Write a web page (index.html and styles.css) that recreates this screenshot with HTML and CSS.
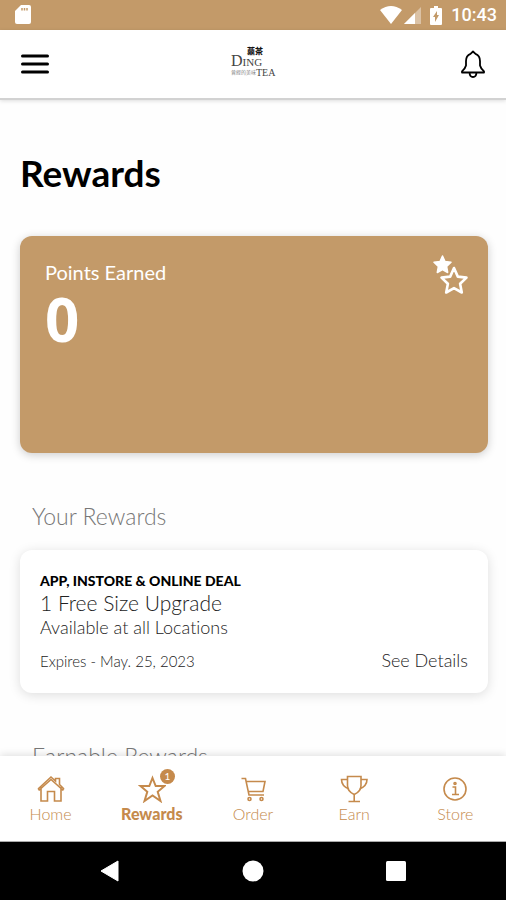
FILE: index.html
```html
<!DOCTYPE html>
<html lang="en">
<head>
<meta charset="utf-8">
<meta name="viewport" content="width=device-width, initial-scale=1">
<title>Rewards</title>
<link rel="stylesheet" href="styles.css">
</head>
<body>
<div class="status">
  <svg class="sd" width="16" height="20" viewBox="0 0 16 20" aria-hidden="true"><path fill="#fff" d="M6 0h8q2 0 2 2v15q0 2-2 2H2q-2 0-2-2V6z"/><path stroke="#c39a69" stroke-width="1.500" d="M7 3v2.500M9.500 3v2.500M12 3v2.500"/></svg>
  <div class="status-right">
    <svg width="22" height="18" viewBox="0 0 22 18" aria-hidden="true"><path fill="#fff" d="M0 4Q11-4 22 4L11 18z"/></svg>
    <svg width="17" height="17" viewBox="0 0 17 17" aria-hidden="true"><path fill="#fff" opacity=".4" d="M17 0v17H0z"/><path fill="#fff" d="M11 6v11H0z"/></svg>
    <svg class="battery" width="12" height="19" viewBox="0 0 12 19" aria-hidden="true"><path fill="#fff" d="M4 0h4v2h3q1 0 1 1v15q0 1-1 1H1q-1 0-1-1V3q0-1 1-1h3z"/><path fill="#c39a69" d="M7 5v4h2l-4 7v-5H3z"/></svg>
    <span class="clock">10:43</span>
  </div>
</div>

<header class="topbar">
  <button class="icon-btn" type="button" aria-label="Menu">
    <svg width="28" height="20" viewBox="0 0 28 20"><path stroke="#000" stroke-width="3" stroke-linecap="round" d="M1.500 2h25M1.500 10h25M1.500 18h25"/></svg>
  </button>
  <div class="logo">
    <span class="logo-mark">薡茶</span>
    <span class="logo-ding"><b>D</b>ING</span>
    <span class="logo-tea"><small>曾經的美味</small>TEA</span>
  </div>
  <button class="icon-btn" type="button" aria-label="Notifications">
    <svg width="24" height="28" viewBox="0 0 24 28" fill="none" stroke="#000" stroke-width="1.800" stroke-linejoin="round"><path d="M12 1.500L9.500 3.800Q5 5.500 5 11v4.500Q4.500 18 1 21.300V22.500H23V21.300Q19.500 18 19 15.500V11Q19 5.500 14.500 3.800zM8.500 22.500Q8.700 27 12 27T15.500 22.500"/></svg>
  </button>
</header>

<main class="content">
  <h1>Rewards</h1>
  <section class="points">
    <div>
      <h2>Points Earned</h2>
      <p class="total">0</p>
    </div>
    <svg width="36" height="40" viewBox="0 0 36 40" aria-hidden="true"><path fill="#fff" stroke="#fff" stroke-width="1.500" stroke-linejoin="round" d="M9.500 1l2.500 5.600 6 .7-4.400 4.200 1.100 6-5.200-3-5.200 3 1.100-6L1 7.300l6-.7z"/><path fill="#c39a69" stroke="#c39a69" stroke-width="6" d="M21 13l3.800 8.600 8.700 1-6.400 6.100 1.700 8.800-7.800-4.400-7.800 4.400 1.700-8.800-6.400-6.100 8.700-1z"/><path fill="none" stroke="#fff" stroke-width="2.600" stroke-linejoin="round" d="M21 13l3.800 8.600 8.700 1-6.400 6.100 1.700 8.800-7.800-4.400-7.800 4.400 1.700-8.800-6.400-6.100 8.700-1z"/></svg>
  </section>

  <h2 class="section-title">Your Rewards</h2>
  <article class="reward">
    <p class="kind">APP, INSTORE &amp; ONLINE DEAL</p>
    <h3>1 Free Size Upgrade</h3>
    <p class="where">Available at all Locations</p>
    <div class="reward-foot">
      <span class="expires">Expires - May. 25, 2023</span>
      <a class="details" href="#details">See Details</a>
    </div>
  </article>
  <h2 class="section-title">Earnable Rewards</h2>
</main>

<nav class="tabs" aria-label="Main">
  <a href="#home"><svg width="28" height="28" viewBox="0 0 28 28"><path d="M1 14L14 2l4.500 4V3.500h4v6L27 14M4 12v14h6.500V16.500h7V26H24V12M1 14l1.200 1L14 4.500 25.800 15 27 14"/></svg><span>Home</span></a>
  <a class="active" href="#rewards" aria-current="page"><svg width="28" height="28" viewBox="0 0 28 28"><path d="M14.500 3l3.200 8h8.800l-6.800 5.800 2.800 9.200-8-5.500-8 5.500 2.800-9.200L2.500 11h8.800z"/></svg><i class="badge">1</i><span>Rewards</span></a>
  <a href="#order"><svg width="28" height="28" viewBox="0 0 28 28"><path d="M2.500 3.500H6.500L10 20H25M7.500 6.500h18.500l-2 10H9.500"/><circle cx="10.500" cy="24" r="1.500"/><circle cx="22.500" cy="24" r="1.500"/></svg><span>Order</span></a>
  <a href="#earn"><svg width="28" height="28" viewBox="0 0 28 28"><path d="M7.500 1.500h13.500v9q0 6-6.800 9-6.700-3-6.700-9zM7.500 4.500H1.500q0 6.500 7.500 9.500M21 4.500h6q0 6.500-7.500 9.500M14.200 19.500v7M8.500 26.500h11.500"/></svg><span>Earn</span></a>
  <a href="#store"><svg width="28" height="28" viewBox="0 0 28 28"><circle cx="14" cy="14" r="11"/><path d="M11.500 12H14.500V19M11 19.500h7"/><circle cx="14" cy="8.500" r="1"/></svg><span>Store</span></a>
</nav>

<div class="system">
  <button type="button" aria-label="Back"><svg width="20" height="22" viewBox="0 0 20 22"><path fill="#fff" d="M18 1v20L1 11z" stroke="#fff" stroke-linejoin="round"/></svg></button>
  <button type="button" aria-label="Home"><svg width="22" height="22" viewBox="0 0 22 22"><circle cx="11" cy="11" r="10.500" fill="#fff"/></svg></button>
  <button type="button" aria-label="Recent apps"><svg width="20" height="20" viewBox="0 0 20 20"><rect width="20" height="20" rx="1.500" fill="#fff"/></svg></button>
</div>
</body>
</html>
```
FILE: styles.css
```css
* { box-sizing: border-box; }
body {
  margin: 0;
  height: 100vh;
  display: flex;
  flex-direction: column;
  background: #fefefe;
  color: #222;
  font-family: Lato, "Liberation Sans", sans-serif;
  font-variant-ligatures: none;
}
h1, h2, h3, p { margin: 0; font-weight: 400; }
svg { display: block; }
a { color: inherit; text-decoration: none; }
button { border: 0; padding: 0; background: none; }

.status {
  flex: none;
  display: flex;
  justify-content: space-between;
  align-items: center;
  height: 30px;
  padding: 0 9px 0 15px;
  background: #c39a69;
}
.status-right { display: flex; align-items: center; gap: 2px; }
.battery { margin-left: 7px; }
.clock { margin-left: 7px; color: #fff; font: 500 18px/30px Roboto, sans-serif; }

.topbar {
  flex: none;
  display: flex;
  justify-content: space-between;
  align-items: center;
  height: 70px;
  padding: 0 21px;
  background: #fff;
  border-bottom: 2px solid #d2d2d2;
  box-shadow: 0 1px 4px #0002;
}
.logo {
  display: grid;
  justify-items: start;
  width: 48px;
  margin-bottom: 4px;
  color: #444;
  font-family: "Liberation Serif", "Noto Sans CJK TC", serif;
}
.logo-mark { margin-left: 16px; color: #111; font: 900 8px/8px "Noto Sans CJK TC", sans-serif; }
.logo-ding { font-size: 11px; line-height: 11px; }
.logo-ding b { font-size: 16px; font-weight: 400; }
.logo-tea { display: flex; align-items: center; font-size: 10px; line-height: 9px; }
.logo-tea small { color: #888; font-size: 5px; }

.content {
  flex: 1;
  min-height: 0;
  overflow: auto;
  scrollbar-width: none;
  padding: 49px 18px 20px 20px;
}
h1 { color: #000; font-size: 37px; line-height: 48px; font-weight: 700; }
.points {
  display: flex;
  justify-content: space-between;
  align-items: flex-start;
  min-height: 217px;
  margin-top: 39px;
  padding: 19px 19px 24px 25px;
  border-radius: 12px;
  background: #c39a69;
  color: #fff;
  box-shadow: 0 2px 10px #0003;
}
.points h2 { padding-top: 5px; font-size: 20px; line-height: 24px; }
.total { font: 700 60px/70px "Open Sans", sans-serif; }
.section-title {
  margin-top: 47px;
  padding-left: 12px;
  color: #777;
  font-size: 23px;
  font-weight: 300;
  line-height: 32px;
}
.reward {
  margin-top: 18px;
  padding: 20px;
  border-radius: 12px;
  background: #fff;
  box-shadow: 0 2px 12px #0002;
}
.kind { color: #000; font-size: 14px; line-height: 22px; font-weight: 900; }
.reward h3 { font-size: 21px; line-height: 22px; font-weight: 300; }
.where { font-size: 18px; line-height: 26px; font-weight: 300; }
.reward-foot {
  display: flex;
  justify-content: space-between;
  align-items: baseline;
  margin-top: 8px;
}
.expires { font-size: 15px; line-height: 24px; font-weight: 300; }
.details { font-size: 18px; line-height: 24px; font-weight: 300; }

.tabs {
  flex: none;
  display: grid;
  grid-template-columns: repeat(5, 1fr);
  padding: 19px 0 16px;
  background: #fff;
  border-bottom: 1px solid #aaa;
  color: #c58a4c;
  box-shadow: 0 -1px 8px #0002;
  z-index: 1;
}
.tabs a {
  position: relative;
  display: flex;
  flex-direction: column;
  align-items: center;
  font-size: 16px;
  font-weight: 300;
  line-height: 22px;
}
.tabs svg { fill: none; stroke: #c58a4c; stroke-width: 1.6; }
.tabs .active { font-weight: 900; }
.tabs .active svg { stroke-width: 2; }
.badge {
  position: absolute;
  top: -6px;
  left: calc(50% + 8px);
  width: 15px;
  height: 15px;
  border-radius: 50%;
  background: #c58a4c;
  color: #fff;
  font-size: 10px;
  font-style: normal;
  font-weight: 400;
  line-height: 15px;
  text-align: center;
}

.system {
  flex: none;
  display: flex;
  justify-content: center;
  align-items: center;
  gap: 122px;
  height: 58px;
  background: #000;
}
```
